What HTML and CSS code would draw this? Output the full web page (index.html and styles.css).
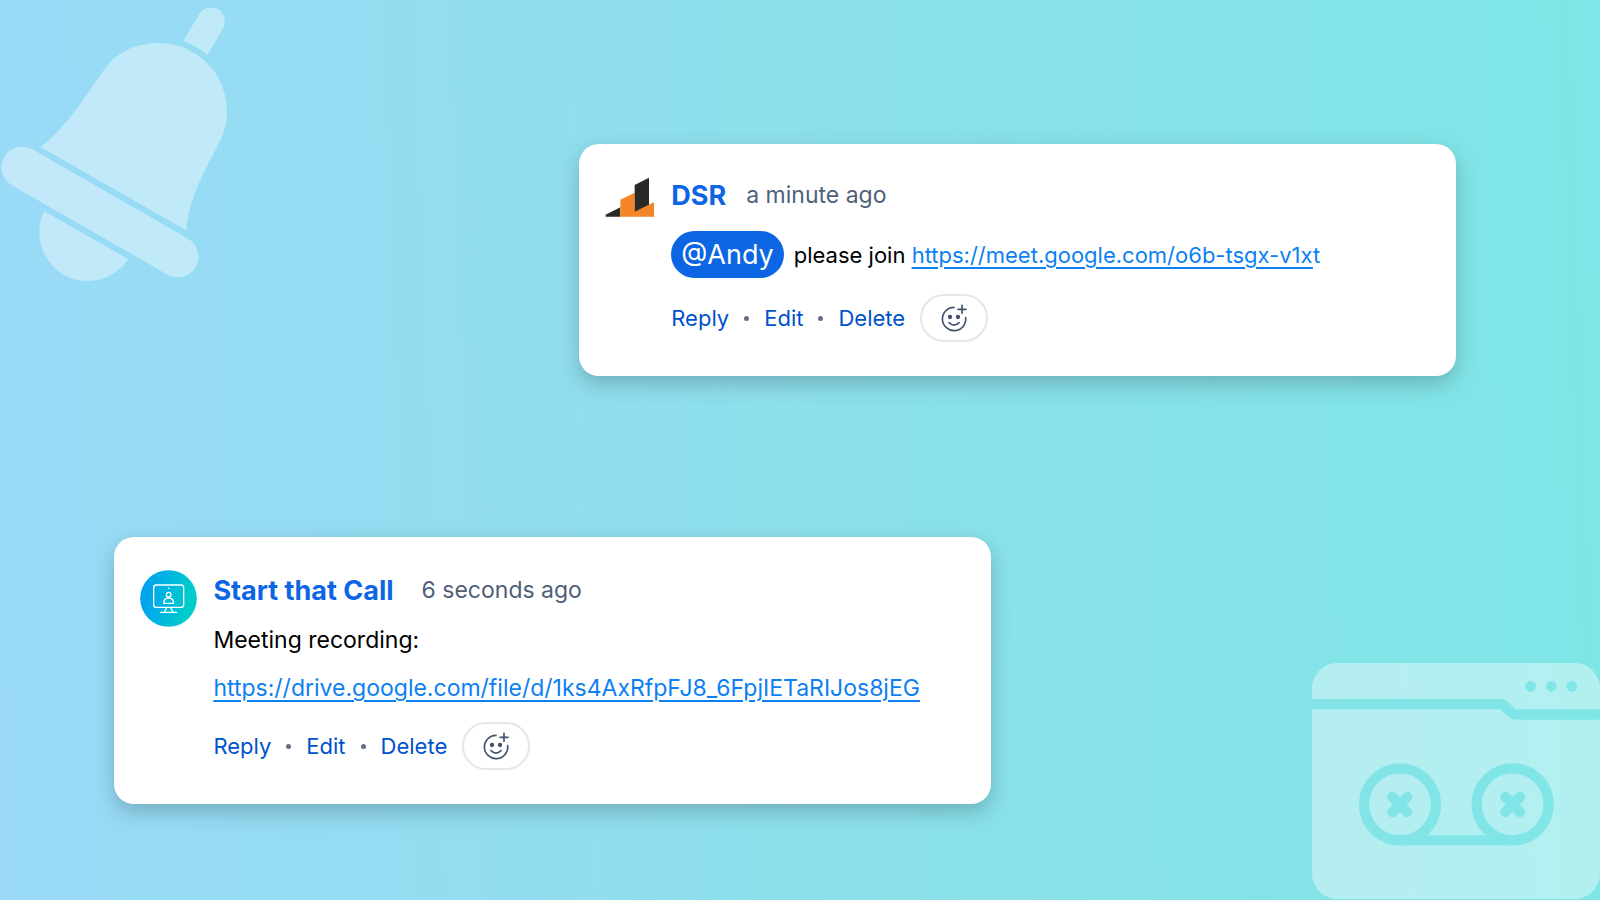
FILE: index.html
```html
<!DOCTYPE html>
<html lang="en">
<head>
<meta charset="utf-8">
<title>Meeting comments</title>
<meta name="viewport" content="width=device-width, initial-scale=1">
<link rel="stylesheet" href="styles.css">
</head>
<body>
<svg class="deco deco-bell" viewBox="0 0 900 900" aria-hidden="true">
  <path d="M550 124 L597 43 A41 41 0 0 1 669 85 L622 165 Q590 138 550 124 Z"/>
  <path d="M122 441 C205 375 255 290 310 212 C350 155 410 129 475 129 C590 129 681 220 681 335 C681 365 675 392 660 422 C620 505 570 580 558 691 Z"/>
  <path d="M97 448 L564 716 A61 61 0 0 1 503 824 L36 556 A61 61 0 0 1 97 448 Z"/>
  <path d="M133 634 L385 778 A146 146 0 0 1 263 843 A146 146 0 0 1 118 697 Q118 663 133 634 Z"/>
</svg>
<svg class="deco deco-window" viewBox="0 0 930 780" aria-hidden="true">
  <mask id="tape" maskUnits="userSpaceOnUse" x="0" y="0" width="930" height="780">
    <rect width="930" height="780" fill="#fff"/>
    <g fill="#000"><circle cx="722" cy="139" r="16"/><circle cx="784" cy="139" r="16"/><circle cx="845" cy="139" r="16"/></g>
    <g fill="none" stroke="#000" stroke-width="31">
      <circle cx="330" cy="493" r="108"/><circle cx="668" cy="493" r="108"/><path d="M330 601 H668"/>
      <path stroke-linecap="round" d="M307 471 L351 516 M351 471 L307 516 M646 471 L690 516 M690 471 L646 516"/>
    </g>
  </mask>
  <g mask="url(#tape)">
    <path d="M66 177 V145 A76 76 0 0 1 142 69 H854 A76 76 0 0 1 930 145 V208 H676 L658 190 Q645 177 630 177 Z"/>
    <path d="M66 208 H630 L648 225 Q662 239 678 239 H930 V701 A76 76 0 0 1 854 777 H142 A76 76 0 0 1 66 701 Z"/>
  </g>
</svg>
<svg width="0" height="0" class="sprite" aria-hidden="true">
  <symbol id="smile" viewBox="90 57 84 84">
    <g fill="none" stroke="#42526e" stroke-width="5" stroke-linecap="round">
      <path d="M132 67 A35 35 0 1 0 167 98"/><path d="M117 113 Q132 128 147 113"/><path d="M144 73 H168 M156 61 V85"/>
    </g>
    <circle cx="120" cy="96" r="6.5" fill="#42526e"/><circle cx="144" cy="96" r="6.5" fill="#42526e"/>
  </symbol>
</svg>
<main class="stage">
  <article class="card card-end">
    <svg class="logo" viewBox="18 20 150 120" role="img" aria-label="DSR logo">
      <path fill="#2b2926" d="M20 133 L64 111 V139 H20 Z"/>
      <path fill="#f58529" d="M64 88 L107 67 V123 L165 96 V139 H64 Z"/>
      <path fill="#2b2926" d="M107 44 L150 22 V103 L107 124 Z"/>
    </svg>
    <div class="content">
      <header class="head"><strong class="name">DSR</strong><time class="time">a minute ago</time></header>
      <p class="message"><span class="mention">@Andy</span><span>please join <a class="link" href="https://meet.google.com/o6b-tsgx-v1xt"><span class="line">https://meet.google.com/o6b-tsgx-v1x</span>t</a></span></p>
      <div class="actions">
        <button class="action" type="button">Reply</button><span class="dot"></span>
        <button class="action" type="button">Edit</button><span class="dot"></span>
        <button class="action" type="button">Delete</button>
        <button class="react" type="button" aria-label="Add reaction"><svg class="smile"><use href="#smile"/></svg></button>
      </div>
    </div>
  </article>
  <article class="card card-start">
    <svg class="avatar" viewBox="32 31 171 171" role="img" aria-label="Start that Call logo">
      <defs><linearGradient id="call" x1="0" y1="0.3" x2="1" y2="0.5"><stop offset="0.1" stop-color="#00a3ee"/><stop offset="0.9" stop-color="#00cdca"/></linearGradient></defs>
      <circle cx="117.5" cy="116.5" r="85" fill="url(#call)"/>
      <g fill="none" stroke="#fff" stroke-width="4" stroke-linejoin="round" stroke-linecap="round">
        <rect x="73" y="76" width="90" height="67" rx="8"/>
        <circle cx="118" cy="105" r="7"/>
        <path d="M103 131 Q103 115 118 115 Q133 115 133 131 Z"/>
        <path d="M112 144 L105 157 M124 144 L131 157 M94 158 H142"/>
      </g>
      <circle cx="118" cy="86" r="2.5" fill="#fff"/>
    </svg>
    <div class="content">
      <header class="head head-wide"><strong class="name">Start that Call</strong><time class="time">6 seconds ago</time></header>
      <div class="note">
        <p>Meeting recording:</p>
        <p><a class="link" href="https://drive.google.com/file/d/1ks4AxRfpFJ8_6FpjIETaRIJos8jEG"><span class="line">https://drive.google.com/file/d/1ks4AxRfpFJ8_6FpjIETaRIJos8jEG</span></a></p>
      </div>
      <div class="actions">
        <button class="action" type="button">Reply</button><span class="dot"></span>
        <button class="action" type="button">Edit</button><span class="dot"></span>
        <button class="action" type="button">Delete</button>
        <button class="react" type="button" aria-label="Add reaction"><svg class="smile"><use href="#smile"/></svg></button>
      </div>
    </div>
  </article>
</main>
</body>
</html>
```
FILE: styles.css
```css
* { box-sizing: border-box; }
body {
  margin: 0;
  position: relative;
  min-height: 100vh;
  font-family: Inter, "Liberation Sans", sans-serif;
  color: #000;
  background: linear-gradient(88deg, #9adaf7 0%, #8be0ea 55%, #7ee6e6 100%);
}
p { margin: 0; }
.sprite { position: absolute; }
.deco { position: absolute; fill: #fff; opacity: 0.4; }
.deco-bell { top: 0; left: 0; width: 300px; height: 300px; }
.deco-window { right: 0; bottom: 0; width: 310px; height: 260px; }
.stage {
  position: relative;
  display: flex;
  flex-direction: column;
  justify-content: space-between;
  gap: 48px;
  min-height: 100vh;
  padding: 144px 9% 96px 7.15%;
}
.card {
  display: flex;
  align-items: flex-start;
  gap: 16px;
  width: 65.35%;
  min-width: 840px;
  padding: 33px 26px 34px;
  border-radius: 20px;
  background: #fff;
  box-shadow: 0 8px 20px rgba(60, 90, 100, 0.35);
}
.card-end { align-self: flex-end; }
.card-start { align-self: flex-start; }
.logo { width: 50px; height: 40px; flex: none; }
.avatar { width: 57px; height: 57px; flex: none; }
.content { flex: 1; }
.head { display: flex; align-items: center; gap: 20px; line-height: 37px; }
.head-wide { gap: 28px; line-height: 41px; }
.name { font-size: 27px; font-weight: 700; color: #0c66e4; }
.time { font-size: 23px; color: #505f79; }
.message { display: flex; align-items: center; gap: 10px; margin-top: 17px; font-size: 22px; line-height: 26px; white-space: nowrap; }
.mention { padding: 0 10px; border-radius: 24px; background: #0c66e4; color: #fff; font-size: 27px; line-height: 47px; }
.link { color: #0c7ff2; text-decoration: none; }
.line { text-decoration: underline; text-decoration-thickness: 2px; text-underline-offset: 4px; }
.note { margin-top: 5px; font-size: 23px; line-height: 48px; }
.actions { display: flex; align-items: center; gap: 15px; margin-top: 16px; }
.note + .actions { margin-top: 10px; }
.action { padding: 0; border: 0; background: none; font: inherit; font-size: 22px; color: #0052cc; }
.dot { width: 5px; height: 5px; border-radius: 50%; background: #626f86; }
.react {
  display: flex;
  align-items: center;
  justify-content: center;
  width: 68px;
  height: 48px;
  padding: 0;
  border: 2px solid #e6e6e8;
  border-radius: 24px;
  background: #fff;
}
.smile { width: 28px; height: 28px; }
```
